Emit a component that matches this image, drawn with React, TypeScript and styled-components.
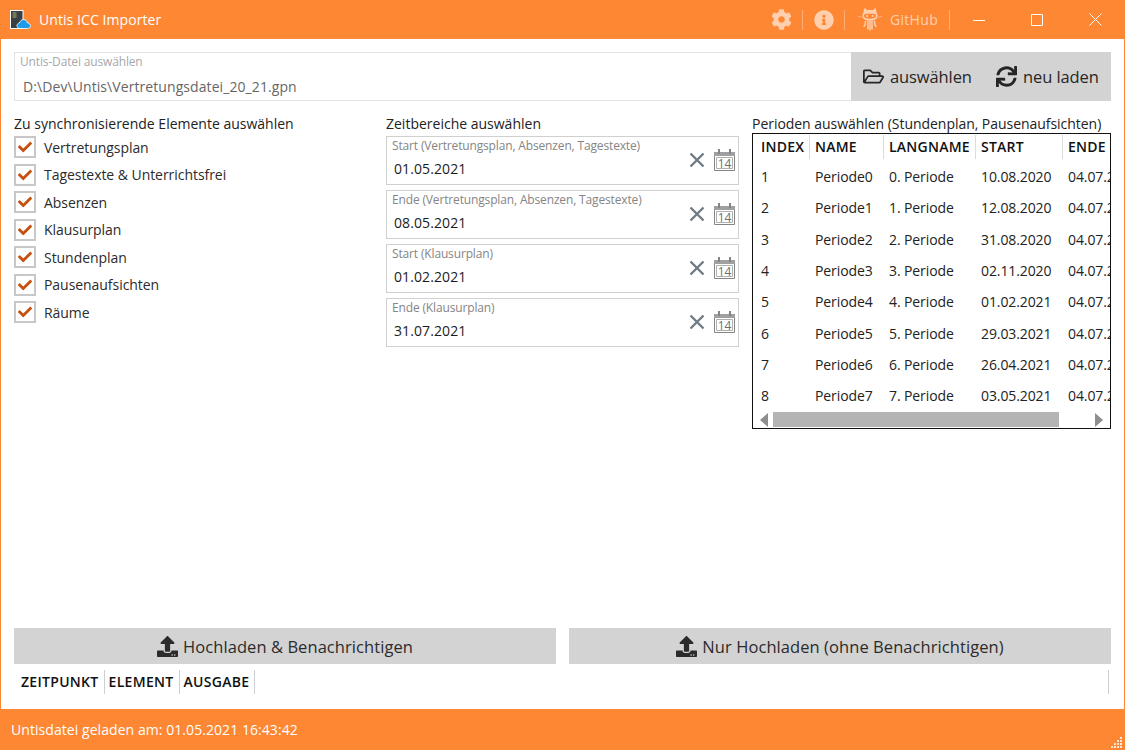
import { createGlobalStyle, styled } from 'styled-components';
import { FaCheck, FaCog, FaInfoCircle, FaRegFolderOpen, FaSync, FaUpload } from 'react-icons/fa';

const UI_FONT = '"Open Sans", "Noto Sans", "Liberation Sans", sans-serif';

const GlobalStyle = createGlobalStyle`
  html, body {
    margin: 0;
    padding: 0;
    background: #fff;
  }
  body {
    font-family: ${UI_FONT};
    color: #1e1e1e;
  }
  * {
    box-sizing: border-box;
  }
`;

const Window = styled.div`
  width: 1125px;
  height: 750px;
  display: flex;
  flex-direction: column;
  overflow: hidden;
  background: #fff;
  border-left: 1px solid #fd8733;
  border-right: 1px solid #fd8733;
`;

const TitleBar = styled.header`
  height: 39px;
  flex: none;
  background: #fd8733;
  display: flex;
  align-items: center;
  padding-left: 9px;
  color: #fff;
`;

const AppTitle = styled.span`
  margin-left: 8px;
  font-size: 14px;
  letter-spacing: 0.07px;
  flex: 1;
`;

const TitleAction = styled.span`
  display: flex;
  align-items: center;
  gap: 8px;
  color: #ffcfae;
  font-size: 14px;
  letter-spacing: 0.3px;
`;

const TitleDivider = styled.span<{ $last?: boolean }>`
  width: 1px;
  height: 20px;
  background: #feb078;
  margin: ${(p) => (p.$last ? '0 0 0 11px' : '0 11px 0 10px')};
`;

const OctocatSlot = styled.span`
  display: flex;
  margin-left: 2px;
`;

const WindowButton = styled.span`
  width: 58px;
  height: 39px;
  display: flex;
  align-items: center;
  justify-content: center;
`;

const Content = styled.main`
  flex: 1;
  min-height: 0;
  display: flex;
  flex-direction: column;
  padding: 13px 13px 0;
`;

const FileRow = styled.section`
  display: flex;
  height: 49px;
  flex: none;
`;

const FileField = styled.div`
  flex: 1;
  border: 1px solid #e3e3e3;
  border-right: none;
  padding: 1px 5px;
`;

const FloatLabel = styled.div<{ $strong?: boolean }>`
  font-size: 12px;
  line-height: 16px;
  letter-spacing: -0.15px;
  color: ${(p) => (p.$strong ? '#858585' : '#a8a8a8')};
`;

const FilePath = styled.div`
  font-size: 14px;
  line-height: 20px;
  letter-spacing: 0.08px;
  margin: 7px 0 0 3px;
  color: #666;
`;

const FileActions = styled.div`
  width: 260px;
  background: #d3d3d3;
  display: flex;
  align-items: center;
  padding-left: 12px;
`;

const FileAction = styled.span<{ $width: number }>`
  width: ${(p) => p.$width}px;
  display: flex;
  align-items: center;
  gap: 6px;
  font-size: 16.5px;
  letter-spacing: -0.1px;
  color: #262626;
`;

const Columns = styled.section`
  flex: 1;
  min-height: 0;
  display: grid;
  grid-template-columns: 372px 366px 359px;
  padding-top: 13px;
`;

const Column = styled.div`
  display: flex;
  flex-direction: column;
`;

const ColumnTitle = styled.div`
  font-size: 14px;
  line-height: 20px;
  letter-spacing: 0;
  color: #222;
`;

const CheckList = styled.div`
  display: flex;
  flex-direction: column;
  gap: 5.5px;
  margin-top: 2px;
`;

const CheckRow = styled.div`
  display: flex;
  align-items: center;
  height: 22px;
  font-size: 14px;
  letter-spacing: -0.05px;
  color: #2b2b2b;
`;

const CheckBox = styled.span`
  width: 22px;
  height: 22px;
  border: 2px solid #c8c8c8;
  display: flex;
  align-items: center;
  justify-content: center;
  color: #c6500f;
  margin-right: 8px;
  font-size: 14px;
`;

const DateList = styled.div`
  width: 353px;
  display: flex;
  flex-direction: column;
  gap: 5px;
  margin-top: 2px;
`;

const DateField = styled.div`
  height: 49px;
  border: 1px solid #d0d0d0;
  display: flex;
  align-items: center;
`;

const DateText = styled.div`
  flex: 1;
  padding: 0 0 4px 5px;
`;

const DateValue = styled.div`
  font-size: 14px;
  line-height: 20px;
  letter-spacing: 0.1px;
  margin: 5px 0 0 2px;
  color: #1c1c1c;
`;

const DateIcons = styled.div`
  display: flex;
  align-items: center;
  gap: 9px;
  padding: 0 3px 1px 0;
`;

const CalendarDay = styled.text`
  font-family: ${UI_FONT};
  font-size: 12px;
  fill: #707070;
`;

const PeriodTitle = styled(ColumnTitle)`
  line-height: 19px;
  letter-spacing: -0.04px;
  white-space: nowrap;
`;

const PeriodTable = styled.div`
  height: 296px;
  border: 1px solid #111;
  margin-top: 0;
  display: flex;
  flex-direction: column;
  overflow: hidden;
`;

const TableRow = styled.div<{ $head?: boolean }>`
  display: grid;
  grid-template-columns: 57px 74px 92px 87px 82px;
  width: 392px;
  height: ${(p) => (p.$head ? '26px' : '31.3px')};
  align-items: center;
  flex: none;
  font-size: 14px;
  letter-spacing: -0.1px;
  color: #222;
`;

const HeadCell = styled.span`
  height: 24px;
  padding-left: 5px;
  border-right: 1px solid #dcdcdc;
  font-size: 14px;
  line-height: 24px;
  font-weight: 600;
  letter-spacing: 0.25px;
  color: #111;
  white-space: nowrap;
  &:first-child {
    padding-left: 8px;
  }
`;

const BodyCell = styled.span`
  padding-left: 5px;
  white-space: nowrap;
  &:first-child {
    padding-left: 8px;
  }
`;

const TableRows = styled.div`
  flex: 1;
  min-height: 0;
  overflow: hidden;
  padding-top: 1px;
`;

const ScrollBar = styled.div`
  height: 17px;
  flex: none;
  display: flex;
  align-items: center;
  padding: 0 7px;
  gap: 5px;
`;

const ScrollThumb = styled.div`
  width: 287px;
  height: 15px;
  background: #b4b4b4;
`;

const ScrollArrow = styled.span<{ $right?: boolean }>`
  width: 0;
  height: 0;
  border-top: 7px solid transparent;
  border-bottom: 7px solid transparent;
  ${(p) => (p.$right ? 'border-left: 8px solid #8e8e8e; margin-left: 31px;' : 'border-right: 8px solid #8e8e8e;')}
`;

const UploadRow = styled.section`
  display: grid;
  grid-template-columns: 1fr 1fr;
  gap: 13px;
  flex: none;
`;

const UploadButton = styled.div`
  height: 36px;
  background: #d3d3d3;
  display: flex;
  align-items: center;
  justify-content: center;
  gap: 5px;
  font-size: 16.5px;
  letter-spacing: 0.07px;
  color: #2b2b2b;
`;

const LogHeader = styled.section`
  height: 45px;
  flex: none;
  padding-top: 6px;
  display: flex;
  align-items: flex-start;
`;

const LogCell = styled.span`
  height: 24px;
  line-height: 24px;
  padding: 0 5px 0 4px;
  border-right: 1px solid #cfcfcf;
  font-size: 14px;
  font-weight: 600;
  letter-spacing: 0.3px;
  color: #111;
  &:first-child {
    padding-left: 7px;
  }
`;

const LogFill = styled.span`
  flex: 1;
  height: 24px;
  margin-right: 2px;
  border-right: 1px solid #cfcfcf;
`;

const StatusBar = styled.footer`
  height: 41px;
  flex: none;
  background: #fd8733;
  display: flex;
  align-items: center;
  justify-content: space-between;
  padding-left: 10px;
  color: #fff;
  font-size: 14px;
  letter-spacing: 0.06px;
`;

const Grip = styled.svg`
  align-self: flex-end;
`;

const elements = [
  'Vertretungsplan',
  'Tagestexte & Unterrichtsfrei',
  'Absenzen',
  'Klausurplan',
  'Stundenplan',
  'Pausenaufsichten',
  'Räume',
];

const ranges = [
  { label: 'Start (Vertretungsplan, Absenzen, Tagestexte)', value: '01.05.2021' },
  { label: 'Ende (Vertretungsplan, Absenzen, Tagestexte)', value: '08.05.2021' },
  { label: 'Start (Klausurplan)', value: '01.02.2021' },
  { label: 'Ende (Klausurplan)', value: '31.07.2021' },
];

const periods = [
  ['1', 'Periode0', '0. Periode', '10.08.2020', '04.07.2021'],
  ['2', 'Periode1', '1. Periode', '12.08.2020', '04.07.2021'],
  ['3', 'Periode2', '2. Periode', '31.08.2020', '04.07.2021'],
  ['4', 'Periode3', '3. Periode', '02.11.2020', '04.07.2021'],
  ['5', 'Periode4', '4. Periode', '01.02.2021', '04.07.2021'],
  ['6', 'Periode5', '5. Periode', '29.03.2021', '04.07.2021'],
  ['7', 'Periode6', '6. Periode', '26.04.2021', '04.07.2021'],
  ['8', 'Periode7', '7. Periode', '03.05.2021', '04.07.2021'],
];

const AppIcon = () => (
  <svg width="21" height="20" viewBox="0 0 21 20">
    <rect x="0.5" y="0.5" width="12.5" height="18" fill="#3a3f44" stroke="#fff" />
    <path d="M2.500 3h4M2.500 5h4M2.500 7h4" stroke="#a5b860" strokeWidth="1" />
    <path d="M10 18.500c-2 0-3-1.300-3-2.800s1-2.600 2.400-2.700C10 11.200 11.500 9.500 13.500 9.500c2.200 0 3.800 1.800 4 3.500 1.700.2 3 1.300 3 2.800 0 1.500-1.200 2.700-3 2.700z" fill="#1e9be8" stroke="#fff" strokeWidth="0.8" />
  </svg>
);

const Octocat = () => (
  <svg width="24" height="23" viewBox="0 0 24 23" fill="#ffcfae">
    <path d="M6.500 0l3 2.200c1.600-.4 3.400-.4 5 0L17.500 0c.8 1.300.9 2.700.7 4 .9 1 1.300 2.300 1.300 3.800 0 3.400-2.700 5-7.500 5s-7.500-1.600-7.500-5c0-1.500.4-2.800 1.300-3.800C5.600 2.700 5.700 1.300 6.500 0z" />
    <path d="M8 5.800h8c1.300 0 2 1 2 2.100 0 1.800-2.400 2.800-6 2.800s-6-1-6-2.800c0-1.100.7-2.100 2-2.100z" fill="#fd8733" />
    <circle cx="9.200" cy="8" r="1.100" />
    <circle cx="14.800" cy="8" r="1.100" />
    <path d="M7.500 13c-.3 3 .2 5-2 5.500M10 13v8.500M12 13v9.500M14 13v8.500M16.500 13c.3 3-.2 5 2 5.500" stroke="#ffcfae" strokeWidth="1.500" fill="none" />
    <path d="M0 8.500l4.500.8M19.500 9.300l4.500-.8" stroke="#ffcfae" strokeWidth="0.6" fill="none" />
  </svg>
);

const ClearIcon = () => (
  <svg width="16" height="16" viewBox="0 0 16 16">
    <path d="M1.500 1.500l13 13M14.500 1.500l-13 13" stroke="#707b85" strokeWidth="2.400" />
  </svg>
);

const CalendarIcon = () => (
  <svg width="21" height="22" viewBox="0 0 21 22">
    <path d="M.5 3.500h20v18H.5z" fill="none" stroke="#858585" />
    <path d="M0 3h21v4H0z" fill="#a0a0a0" />
    <path d="M2.500 8.500h16v11h-16z" fill="none" stroke="#b0b0b0" />
    <path d="M5 0v5M16 0v5" stroke="#858585" strokeWidth="2" />
    <CalendarDay x="10.500" y="18.500" textAnchor="middle">14</CalendarDay>
  </svg>
);

export default function App() {
  return (
    <>
      <GlobalStyle />
      <Window>
        <TitleBar>
          <AppIcon />
          <AppTitle>Untis ICC Importer</AppTitle>
          <TitleAction>
            <FaCog size={21} />
          </TitleAction>
          <TitleDivider />
          <TitleAction>
            <FaInfoCircle size={20} />
          </TitleAction>
          <TitleDivider />
          <TitleAction>
            <OctocatSlot>
              <Octocat />
            </OctocatSlot>
            GitHub
          </TitleAction>
          <TitleDivider $last />
          <WindowButton>
            <svg width="12" height="12" viewBox="0 0 12 12">
              <path d="M0 6.500h12" stroke="#fff" />
            </svg>
          </WindowButton>
          <WindowButton>
            <svg width="12" height="12" viewBox="0 0 12 12">
              <path d="M.5.500h11v11H.5z" fill="none" stroke="#fff" />
            </svg>
          </WindowButton>
          <WindowButton>
            <svg width="13" height="13" viewBox="0 0 13 13">
              <path d="M.5.500l12 12M12.500.500l-12 12" stroke="#fff" />
            </svg>
          </WindowButton>
        </TitleBar>
        <Content>
          <FileRow>
            <FileField>
              <FloatLabel>Untis-Datei auswählen</FloatLabel>
              <FilePath>D:\Dev\Untis\Vertretungsdatei_20_21.gpn</FilePath>
            </FileField>
            <FileActions>
              <FileAction $width={133}>
                <FaRegFolderOpen size={21} />
                auswählen
              </FileAction>
              <FileAction $width={115}>
                <FaSync size={21} />
                neu laden
              </FileAction>
            </FileActions>
          </FileRow>
          <Columns>
            <Column>
              <ColumnTitle>Zu synchronisierende Elemente auswählen</ColumnTitle>
              <CheckList>
                {elements.map((name) => (
                  <CheckRow key={name}>
                    <CheckBox>
                      <FaCheck />
                    </CheckBox>
                    {name}
                  </CheckRow>
                ))}
              </CheckList>
            </Column>
            <Column>
              <ColumnTitle>Zeitbereiche auswählen</ColumnTitle>
              <DateList>
                {ranges.map((range) => (
                  <DateField key={range.label}>
                    <DateText>
                      <FloatLabel $strong>{range.label}</FloatLabel>
                      <DateValue>{range.value}</DateValue>
                    </DateText>
                    <DateIcons>
                      <ClearIcon />
                      <CalendarIcon />
                    </DateIcons>
                  </DateField>
                ))}
              </DateList>
            </Column>
            <Column>
              <PeriodTitle>Perioden auswählen (Stundenplan, Pausenaufsichten)</PeriodTitle>
              <PeriodTable>
                <TableRow $head>
                  {['INDEX', 'NAME', 'LANGNAME', 'START', 'ENDE'].map((col) => (
                    <HeadCell key={col}>{col}</HeadCell>
                  ))}
                </TableRow>
                <TableRows>
                  {periods.map((row) => (
                    <TableRow key={row[0]}>
                      {row.map((cell) => (
                        <BodyCell key={cell}>{cell}</BodyCell>
                      ))}
                    </TableRow>
                  ))}
                </TableRows>
                <ScrollBar>
                  <ScrollArrow />
                  <ScrollThumb />
                  <ScrollArrow $right />
                </ScrollBar>
              </PeriodTable>
            </Column>
          </Columns>
          <UploadRow>
            <UploadButton>
              <FaUpload size={21} />
              Hochladen &amp; Benachrichtigen
            </UploadButton>
            <UploadButton>
              <FaUpload size={21} />
              Nur Hochladen (ohne Benachrichtigen)
            </UploadButton>
          </UploadRow>
          <LogHeader>
            <LogCell>ZEITPUNKT</LogCell>
            <LogCell>ELEMENT</LogCell>
            <LogCell>AUSGABE</LogCell>
            <LogFill />
          </LogHeader>
        </Content>
        <StatusBar>
          Untisdatei geladen am: 01.05.2021 16:43:42
          <Grip width="16" height="16" viewBox="0 0 16 16" fill="#fff" opacity="0.8">
            <rect x="12" y="3" width="2" height="2" />
            <rect x="9" y="6" width="2" height="2" />
            <rect x="12" y="6" width="2" height="2" />
            <rect x="6" y="9" width="2" height="2" />
            <rect x="9" y="9" width="2" height="2" />
            <rect x="12" y="9" width="2" height="2" />
            <rect x="3" y="12" width="2" height="2" />
            <rect x="6" y="12" width="2" height="2" />
            <rect x="9" y="12" width="2" height="2" />
            <rect x="12" y="12" width="2" height="2" />
          </Grip>
        </StatusBar>
      </Window>
    </>
  );
}
